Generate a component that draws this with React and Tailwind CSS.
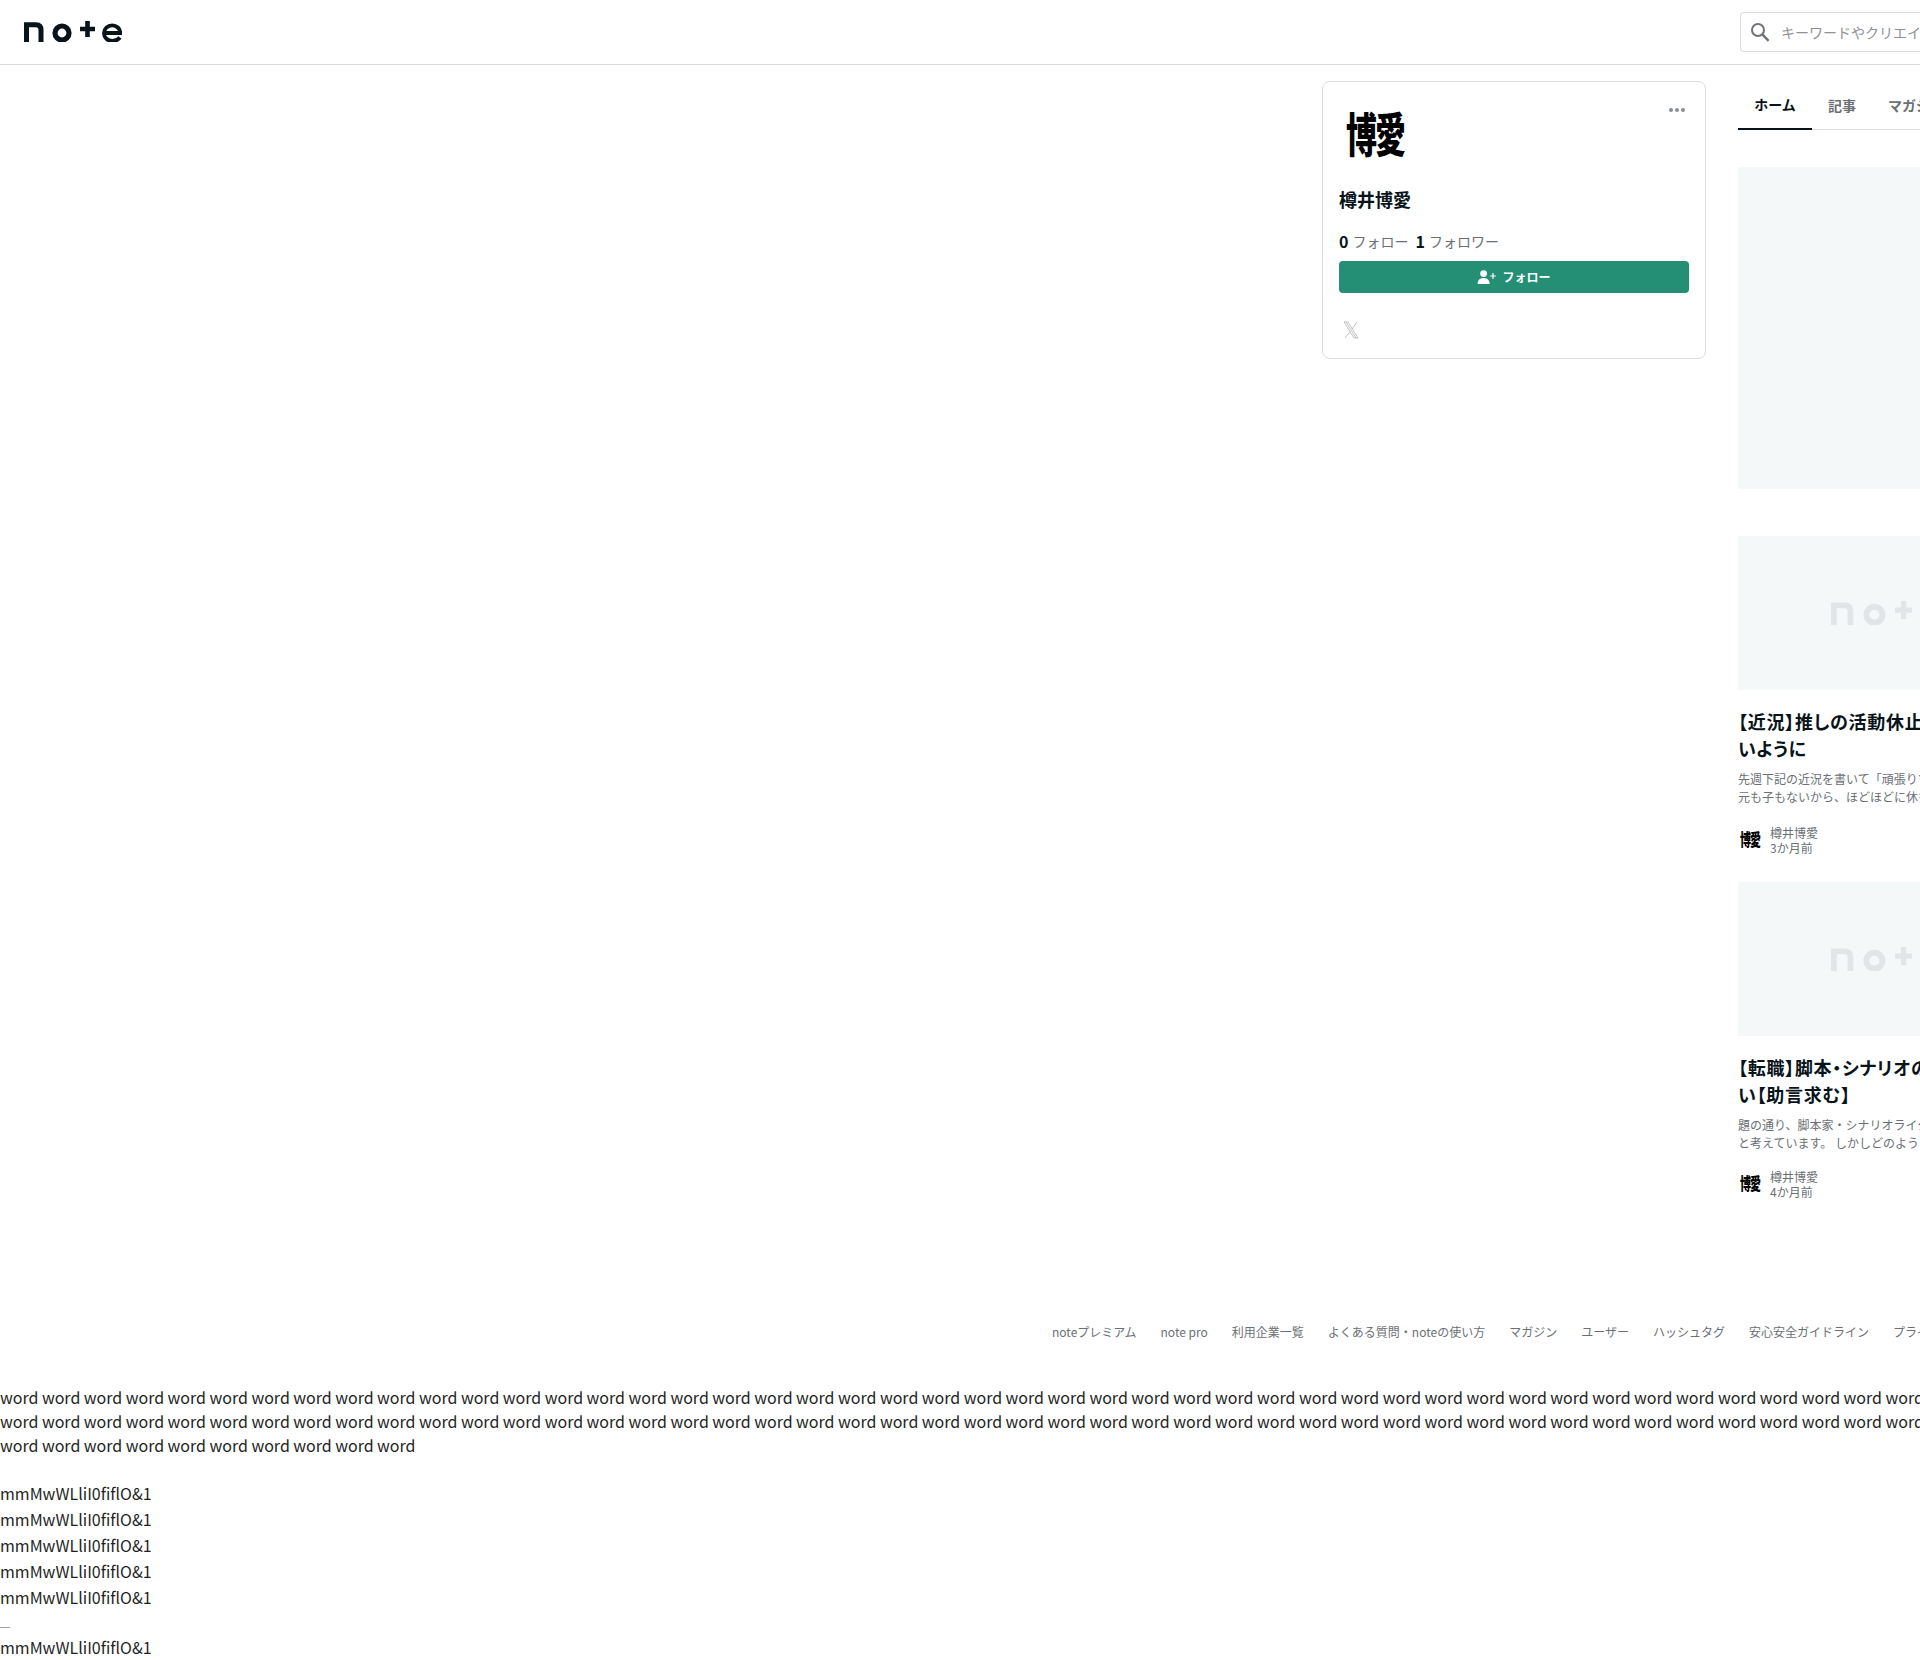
import React from "react";

const font = { fontFamily: '"Noto Sans CJK JP", "Noto Sans", sans-serif' };

function Logo({ className, color = "#08131a" }) {
  return (
    <svg viewBox="0 0 98 21" className={className} fill="none" stroke={color} strokeWidth="5">
      <path d="M2.5 21V3.8H12C15.6 3.8 17 5.6 17 9V21" />
      <circle cx="38" cy="12" r="7" strokeWidth="5.2" />
      <path d="M63.5 0V16M56 8H71" strokeWidth="4.6" />
      <path d="M80.5 12H96.2C96.2 7.6 92.6 4.4 88.2 4.4 83.6 4.4 80 7.8 80 12.2S83.6 20 88.4 20C91.6 20 94.2 18.8 96 16.6" strokeWidth="3.9" />
    </svg>
  );
}

function Avatar({ className }) {
  return (
    <div className={`flex items-center justify-center whitespace-nowrap font-black text-black ${className}`}>
      博愛
    </div>
  );
}

function Thumb() {
  return (
    <div className="h-[154px] w-full overflow-hidden bg-[#f5f8f9] pl-[93px] pt-[65px]">
      <Logo className="h-[24px] w-[112px]" color="#e1e5e7" />
    </div>
  );
}

function Note({ title1, title2, desc1, desc2, date, mb, authorMt }) {
  return (
    <article className={mb}>
      <Thumb />
      <h3 className="mt-[18px] whitespace-nowrap text-[18px] font-bold leading-[27px] tracking-[0.04em] text-[#08131a] [font-feature-settings:'palt']">
        <div>{title1}</div>
        <div>{title2}</div>
      </h3>
      <p className="mt-[8px] whitespace-nowrap text-[12px] leading-[18px] text-[#6b7075]">
        <span className="block">{desc1}</span>
        <span className="block">{desc2}</span>
      </p>
      <div className={`${authorMt} flex items-center gap-[8px]`}>
        <Avatar className="mt-[-4px] h-[24px] w-[24px] origin-center scale-y-[1.55] text-[11px] tracking-[-1px]" />
        <div className="text-[12px] leading-[15px] text-[#6b7075]">
          <div>樽井博愛</div>
          <div>{date}</div>
        </div>
      </div>
    </article>
  );
}

const footerLinks = [
  "noteプレミアム",
  "note pro",
  "利用企業一覧",
  "よくある質問・noteの使い方",
  "マガジン",
  "ユーザー",
  "ハッシュタグ",
  "安心安全ガイドライン",
  "プライバシー",
];

const words = Array(102).fill("word").join(" ");

export default function App() {
  return (
    <div style={font} className="h-[1660px] w-[1920px] overflow-hidden bg-white text-[#08131a]">
      <header className="flex h-[65px] items-center justify-between border-b border-[#dcdcdc] pl-[24px]">
        <Logo className="mt-[-1px] h-[21px] w-[98px]" />
        <div className="flex h-[40px] w-[180px] items-center rounded-l-[4px] border border-r-0 border-[#dcdcdc] pl-[9px]">
          <svg viewBox="0 0 20 20" className="h-[20px] w-[20px] shrink-0" fill="none" stroke="#6f7377" strokeWidth="2">
            <circle cx="8" cy="8" r="6" />
            <path d="M12.4 12.4L18.6 18.8" strokeWidth="2.4" />
          </svg>
          <span className="ml-[11px] whitespace-nowrap text-[14px] text-[#8e9296]">キーワードやクリエイターで検索</span>
        </div>
      </header>

      <main className="flex h-[1232px] pl-[1322px] pt-[16px]">
        <aside className="h-[278px] w-[384px] shrink-0 rounded-[8px] border border-[#dcdcdc] px-[16px]">
          <div className="flex items-start justify-between">
            <Avatar className="mt-[27px] ml-[6px] h-[46px] w-[60px] origin-center scale-y-[1.5] text-[31px] tracking-[-2px]" />
            <div className="mt-[26px] flex gap-[2px] pr-[4px]">
              <span className="h-[4px] w-[4px] rounded-full bg-[#8b8f93]" />
              <span className="h-[4px] w-[4px] rounded-full bg-[#8b8f93]" />
              <span className="h-[4px] w-[4px] rounded-full bg-[#8b8f93]" />
            </div>
          </div>
          <h2 className="mt-[31px] text-[18px] font-bold leading-[27px] [font-feature-settings:'palt']">樽井博愛</h2>
          <div className="mt-[18px] flex items-center text-[14px] leading-[20px] text-[#6b7075]">
            <b className="mr-[4px] text-[16px] font-bold text-[#08131a]">0</b>
            フォロー
            <b className="ml-[7px] mr-[4px] text-[16px] font-bold text-[#08131a]">1</b>
            フォロワー
          </div>
          <button className="mt-[10px] flex h-[32px] w-full items-center justify-center gap-[6px] rounded-[4px] bg-[#258f76] text-[12px] font-bold text-white">
            <svg viewBox="0 0 19 14" className="h-[14px] w-[19px]" fill="#fff">
              <circle cx="6.6" cy="3.6" r="3.4" />
              <path d="M0.6 14C0.6 10 3 8 6.6 8S12.6 10 12.6 14Z" />
              <path d="M16 3v6M13.2 6h5.6" stroke="#fff" strokeWidth="1.2" fill="none" />
            </svg>
            フォロー
          </button>
          <svg viewBox="0 0 16 18" className="ml-[4px] mt-[28px] h-[18px] w-[16px]" fill="none" stroke="#9a9ea2" strokeWidth="0.6">
            <path d="M1 1H5L15 17H11ZM3 1L13 17M14 1L9 8M7 10.5L2 17" />
          </svg>
        </aside>

        <section className="ml-[32px] w-[620px] shrink-0">
          <nav className="flex h-[49px] border-b border-[#dcdcdc] text-[14px] font-bold">
            <div className="flex h-[49px] w-[74px] items-center justify-center border-b-2 border-[#08131a]">ホーム</div>
            <div className="flex h-[48px] w-[60px] items-center justify-center text-[#6b7075]">記事</div>
            <div className="ml-[16px] flex h-[48px] items-center whitespace-nowrap text-[#6b7075]">マガジン</div>
          </nav>
          <div className="mt-[37px] h-[322px] w-full bg-[#f5f8f9]" />
          <div className="mt-[47px]">
            <Note
              title1="【近況】推しの活動休止を受けて、無理をしな"
              title2="いように"
              desc1="先週下記の近況を書いて「頑張りすぎても"
              desc2="元も子もないから、ほどほどに休もう"
              date="3か月前"
              mb="mb-[27px]"
              authorMt="mt-[19px]"
            />
            <Note
              title1="【転職】脚本・シナリオの仕事に就きた"
              title2="い【助言求む】"
              desc1="題の通り、脚本家・シナリオライターになりたい"
              desc2="と考えています。 しかしどのようにすれば"
              date="4か月前"
              authorMt="mt-[17px]"
            />
          </div>
        </section>
      </main>

      <footer className="flex h-[88px] items-start gap-[24px] whitespace-nowrap pl-[1052px] pt-[26px] text-[12px] leading-[18px] text-[#6b7075]">
        {footerLinks.map((l) => (
          <span key={l}>{l}</span>
        ))}
      </footer>

      <div className="text-[16px] text-[#1f1f1f]">
        <p className="w-[1960px] leading-[24px] [word-spacing:-0.1px]">{words}</p>
        <div className="mt-[23px] leading-[26px]">
          <div>mmMwWLliI0fiflO&amp;1</div>
          <div>mmMwWLliI0fiflO&amp;1</div>
          <div>mmMwWLliI0fiflO&amp;1</div>
          <div>mmMwWLliI0fiflO&amp;1</div>
          <div>mmMwWLliI0fiflO&amp;1</div>
        </div>
        <hr className="mt-[17px] w-[10px] border-[#a0a0a0]" />
        <div className="mt-[6px] leading-[26px]">mmMwWLliI0fiflO&amp;1</div>
      </div>
    </div>
  );
}
